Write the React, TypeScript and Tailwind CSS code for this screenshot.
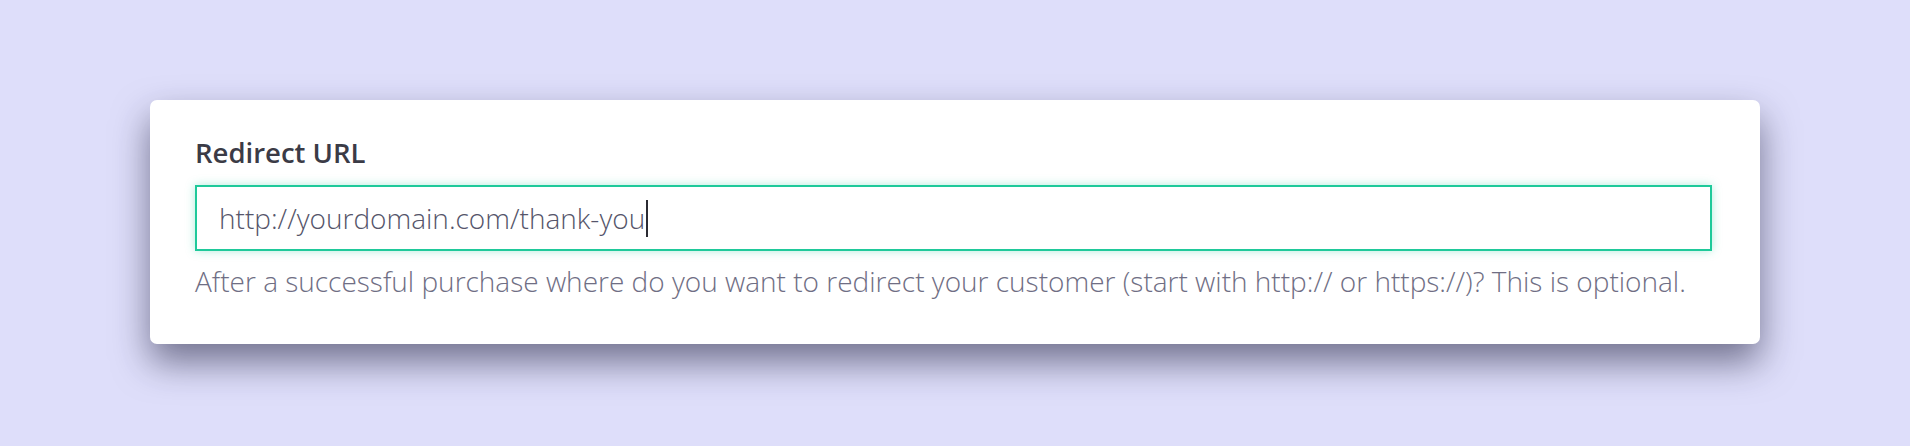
export default function App() {
  return (
    <div className="w-full h-[446px] bg-[#dedefa] overflow-hidden pt-[100px] px-[150px] font-['Open_Sans',sans-serif]">
      <div className="relative bg-white rounded-[7px] shadow-[0_18px_36px_rgba(25,25,55,0.55)] pl-[45px] pr-[48px] pt-[35px] pb-[46px]">
        <label className="block text-[27.5px] leading-[36px] font-semibold text-[#3b3b46]">
          Redirect URL
        </label>
        <div className="mt-[14px] h-[66px] border-2 border-[#1fc99a] shadow-[0_0_9px_rgba(31,201,154,0.35)] flex items-center pl-[22px]">
          <span className="text-[28px] leading-[36px] font-light text-[#55556a]">
            http://yourdomain.com/thank-you
          </span>
          <span className="w-[2px] h-[37px] bg-[#2b2b33] ml-[1px]" />
        </div>
        <p className="mt-[13px] text-[28px] leading-[34px] font-light text-[#6f6e84]">
          After a successful purchase where do you want to redirect your customer (start with http:// or https://)? This is optional.
        </p>
      </div>
    </div>
  );
}
